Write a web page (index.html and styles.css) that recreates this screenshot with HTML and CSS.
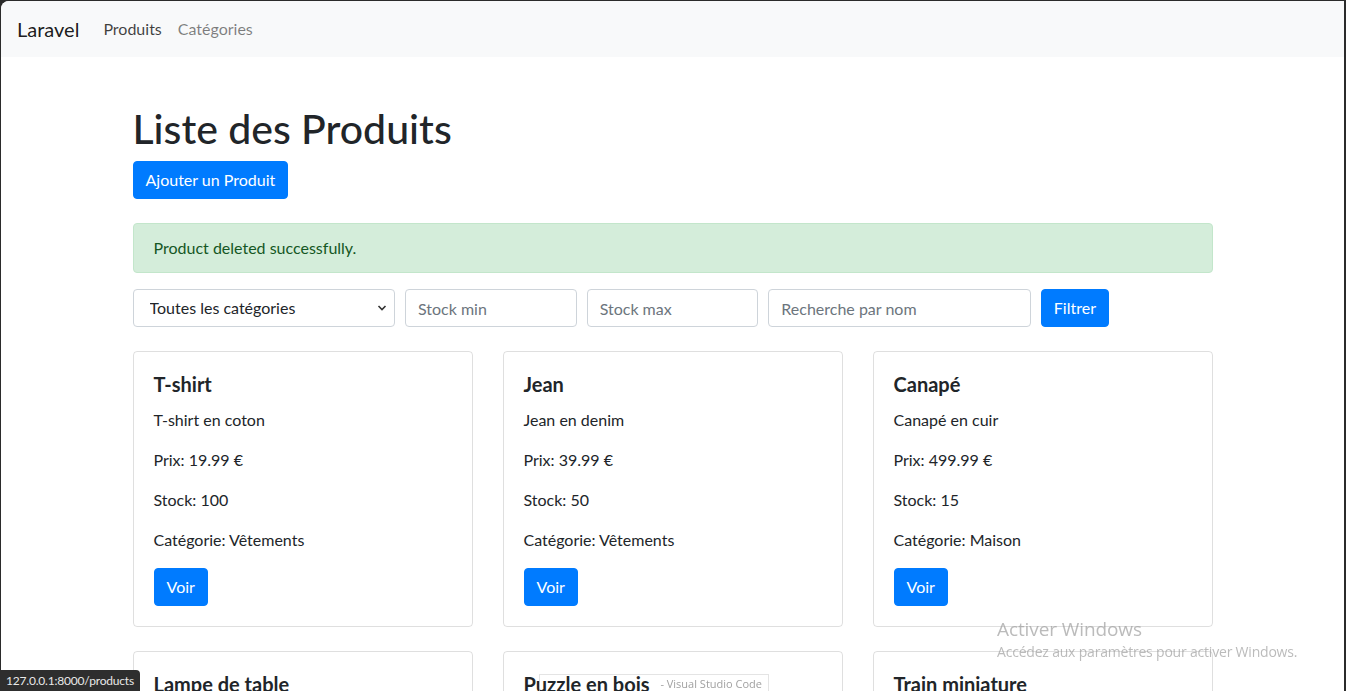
FILE: index.html
```html
<!DOCTYPE html>
<html lang="fr">
<head>
<meta charset="utf-8">
<title>Produits</title>
<link rel="stylesheet" href="styles.css">
</head>
<body>
<div class="window">
  <nav class="navbar">
    <a class="brand" href="#">Laravel</a>
    <a class="nav-link active" href="#">Produits</a>
    <a class="nav-link" href="#">Catégories</a>
  </nav>
  <main class="container">
    <h1 class="title">Liste des Produits</h1>
    <a class="btn btn-add" href="#">Ajouter un Produit</a>
    <div class="alert">Product deleted successfully.</div>
    <form class="filters">
      <div class="col col-3 select-wrap">
        <select class="form-control">
          <option>Toutes les catégories</option>
        </select>
        <svg class="chevron" width="10" height="10" viewBox="0 0 10 10"><path d="M1.5 3 L5 6.5 L8.5 3" fill="none" stroke="#333" stroke-width="1.6"/></svg>
      </div>
      <div class="col col-2"><input class="form-control" placeholder="Stock min"></div>
      <div class="col col-2"><input class="form-control" placeholder="Stock max"></div>
      <div class="col col-3"><input class="form-control" placeholder="Recherche par nom"></div>
      <div class="col col-2"><button class="btn" type="button">Filtrer</button></div>
    </form>
    <div class="grid">
      <div class="card"><h5>T-shirt</h5><p>T-shirt en coton</p><p>Prix: 19.99 €</p><p>Stock: 100</p><p>Catégorie: Vêtements</p><a class="btn" href="#">Voir</a></div>
      <div class="card"><h5>Jean</h5><p>Jean en denim</p><p>Prix: 39.99 €</p><p>Stock: 50</p><p>Catégorie: Vêtements</p><a class="btn" href="#">Voir</a></div>
      <div class="card"><h5>Canapé</h5><p>Canapé en cuir</p><p>Prix: 499.99 €</p><p>Stock: 15</p><p>Catégorie: Maison</p><a class="btn" href="#">Voir</a></div>
      <div class="card"><h5>Lampe de table</h5><p>Lampe de chevet</p><p>Prix: 29.99 €</p><p>Stock: 30</p><p>Catégorie: Maison</p><a class="btn" href="#">Voir</a></div>
      <div class="card"><h5>Puzzle en bois</h5><p>Puzzle pour enfants</p><p>Prix: 14.99 €</p><p>Stock: 40</p><p>Catégorie: Jouets</p><a class="btn" href="#">Voir</a></div>
      <div class="card"><h5>Train miniature</h5><p>Train électrique</p><p>Prix: 89.99 €</p><p>Stock: 10</p><p>Catégorie: Jouets</p><a class="btn" href="#">Voir</a></div>
    </div>
  </main>
</div>
<div class="watermark">
  <div class="wm-title">Activer Windows</div>
  <div class="wm-sub">Accédez aux paramètres pour activer Windows.</div>
</div>
<div class="taskbar-tip">- Visual Studio Code</div>
<div class="status">127.0.0.1:8000/products</div>
</body>
</html>
```

FILE: styles.css
```css
* { box-sizing: border-box; }
html, body { margin: 0; padding: 0; }
body {
  background: #2b2b2b;
  font-family: Lato, "Noto Sans", sans-serif;
  font-size: 16px;
  line-height: 1.5;
  color: #212529;
  overflow: hidden;
  height: 691px;
}
.window {
  margin: 1px 2px 0 1px;
  background: #fff;
  border-top-left-radius: 8px;
  min-height: 800px;
  overflow: hidden;
}
.navbar {
  display: flex;
  align-items: center;
  height: 56px;
  padding: 8px 16px;
  background: #f8f9fa;
}
.brand {
  font-size: 20px;
  line-height: 30px;
  color: rgba(0,0,0,.9);
  text-decoration: none;
  margin-right: 16px;
}
.nav-link {
  padding: 8px;
  color: rgba(0,0,0,.5);
  text-decoration: none;
}
.nav-link.active { color: rgba(0,0,0,.75); }
.container {
  width: 1080px;
  margin: 48px auto 0;
}
.title {
  font-size: 41px;
  font-weight: 500;
  line-height: 48px;
  margin: 0 0 8px;
}
.btn {
  display: inline-block;
  background: #007bff;
  color: #fff;
  border: 1px solid #007bff;
  border-radius: 4px;
  padding: 6px 12px;
  font: inherit;
  line-height: 24px;
  text-decoration: none;
  cursor: pointer;
}
.btn-add { margin-bottom: 24px; }
.alert {
  background: #d4edda;
  border: 1px solid #c3e6cb;
  color: #155724;
  border-radius: 4px;
  padding: 12px 20px;
  margin-bottom: 16px;
}
.filters {
  display: grid;
  grid-template-columns: 3fr 2fr 2fr 3fr 2fr;
  margin: 0 -5px 24px;
}
.col { padding: 0 5px; }
.select-wrap { position: relative; }
.form-control {
  display: block;
  width: 100%;
  height: 38px;
  padding: 6px 12px;
  font: inherit;
  line-height: 24px;
  color: #495057;
  background: #fff;
  border: 1px solid #ced4da;
  border-radius: 4px;
}
.form-control::placeholder { color: #6c757d; opacity: 1; }
select.form-control {
  appearance: none;
  -webkit-appearance: none;
  padding-left: 16px;
  color: #212529;
}
.chevron {
  position: absolute;
  right: 13px;
  top: 14px;
  pointer-events: none;
}
.grid {
  display: grid;
  grid-template-columns: repeat(3, 1fr);
  column-gap: 30px;
  row-gap: 24px;
}
.card {
  border: 1px solid rgba(0,0,0,.125);
  border-radius: 4px;
  padding: 20px;
}
.card h5 {
  font-size: 20px;
  font-weight: 700;
  line-height: 24px;
  margin: 0 0 12px;
}
.card p { margin: 0 0 16px; }
.watermark {
  position: fixed;
  left: 997px;
  top: 616px;
  color: rgba(150,150,150,.65);
  font-family: "Open Sans", "Noto Sans", sans-serif;
}
.wm-title { font-size: 19px; line-height: 26px; letter-spacing: -0.1px; }
.wm-sub { font-size: 14px; line-height: 20px; margin-top: 0; letter-spacing: -0.2px; }
.taskbar-tip {
  position: fixed;
  left: 539px;
  top: 674px;
  width: 230px;
  height: 22px;
  border: 1px solid rgba(210,210,210,.6);
  background: transparent;
  color: rgba(150,150,150,.9);
  font-family: "Open Sans", sans-serif;
  font-size: 11px;
  line-height: 18px;
  text-align: right;
  padding-right: 6px;
}
.status {
  position: fixed;
  left: 0;
  bottom: 0;
  height: 21px;
  padding: 0 6px;
  background: #2e2e2e;
  border-top-right-radius: 4px;
  color: #e8e8e8;
  font-size: 12px;
  letter-spacing: -0.2px;
  line-height: 21px;
}
```
